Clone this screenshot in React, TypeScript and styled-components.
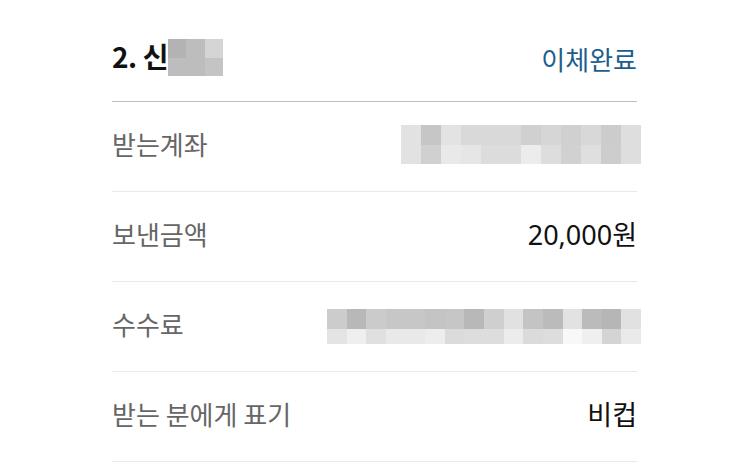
import React from "react";
import styled, { createGlobalStyle } from "styled-components";

const Global = createGlobalStyle`
  html, body { margin: 0; padding: 0; background: #ffffff; }
  body { font-family: "Noto Sans CJK KR", "Noto Sans", sans-serif; }
`;

const Page = styled.div`
  width: 750px;
  height: 468px;
  box-sizing: border-box;
  padding: 0 113px 0 112px;
  background: #fff;
  overflow: hidden;
`;

const Header = styled.div`
  height: 86px;
  padding-top: 15px;
  border-bottom: 1px solid #bdbdbd;
  display: flex;
  align-items: center;
  justify-content: space-between;
`;

const Title = styled.div`
  display: flex;
  align-items: center;
  font-size: 28px;
  font-weight: 700;
  color: #111;
  letter-spacing: -0.4px;
`;

const TitleText = styled.span`
  padding-bottom: 4px;
`;

const Status = styled.div`
  font-size: 26px;
  color: #1d5e8e;
`;

const Row = styled.div`
  height: 89px;
  border-bottom: 1px solid #e9e9e9;
  display: flex;
  align-items: center;
  justify-content: space-between;
`;

const Label = styled.div`
  font-size: 26px;
  color: #666;
  padding-bottom: 7px;
`;

const Value = styled.div`
  font-family: "Noto Sans", "Noto Sans CJK KR", sans-serif;
  font-size: 27px;
  color: #111;
  padding-bottom: 6px;
`;

const Mosaic = styled.div<{ $cols: number; $width: number; $rows: string; $right?: number; $shift?: number }>`
  display: grid;
  width: ${(p) => p.$width}px;
  grid-template-columns: repeat(${(p) => p.$cols}, 1fr);
  grid-template-rows: ${(p) => p.$rows};
  margin-right: ${(p) => p.$right ?? 0}px;
  margin-top: ${(p) => p.$shift ?? 0}px;
`;

const Cell = styled.div``;

const hex = (v: number) => {
  const h = v.toString(16).padStart(2, "0");
  return `#${h}${h}${h}`;
};

function Pixels({ rows, width, heights, right, shift }: { rows: number[][]; width: number; heights: string; right?: number; shift?: number }) {
  return (
    <Mosaic $cols={rows[0].length} $width={width} $rows={heights} $right={right} $shift={shift}>
      {rows.flatMap((r, i) => r.map((v, j) => <Cell key={`${i}-${j}`} style={{ background: hex(v) }} />))}
    </Mosaic>
  );
}

const titleBlur = [
  [0xb3, 0xbd, 0xd5],
  [0xbd, 0xbd, 0xc4],
];

const accountBlur = [
  [0xe2, 0xc6, 0xe3, 0xd9, 0xd9, 0xd9, 0xd0, 0xd6, 0xd0, 0xd8, 0xcc, 0xde],
  [0xe2, 0xd0, 0xe9, 0xe6, 0xdc, 0xdc, 0xec, 0xdd, 0xd1, 0xdf, 0xcd, 0xde],
];

const feeBlur = [
  [0xcc, 0xb8, 0xcb, 0xc7, 0xc7, 0xc4, 0xc6, 0xb8, 0xcf, 0xe1, 0xc4, 0xbb, 0xe2, 0xbb, 0xb6, 0xe1],
  [0xe4, 0xef, 0xe0, 0xe9, 0xe9, 0xed, 0xdb, 0xdd, 0xdd, 0xec, 0xdb, 0xdd, 0xf8, 0xef, 0xd4, 0xea],
];

export default function App() {
  return (
    <>
      <Global />
      <Page>
        <Header>
          <Title>
            <TitleText>2. 신</TitleText>
            <Pixels rows={titleBlur} width={55} heights="19px 18px" shift={-1} />
          </Title>
          <Status>이체완료</Status>
        </Header>
        <Row>
          <Label>받는계좌</Label>
          <Pixels rows={accountBlur} width={240} heights="20px 19px" right={-4} shift={-4} />
        </Row>
        <Row>
          <Label>보낸금액</Label>
          <Value>20,000원</Value>
        </Row>
        <Row>
          <Label>수수료</Label>
          <Pixels rows={feeBlur} width={314} heights="20px 15px" right={-4} />
        </Row>
        <Row>
          <Label>받는 분에게 표기</Label>
          <Value>비컵</Value>
        </Row>
      </Page>
    </>
  );
}
